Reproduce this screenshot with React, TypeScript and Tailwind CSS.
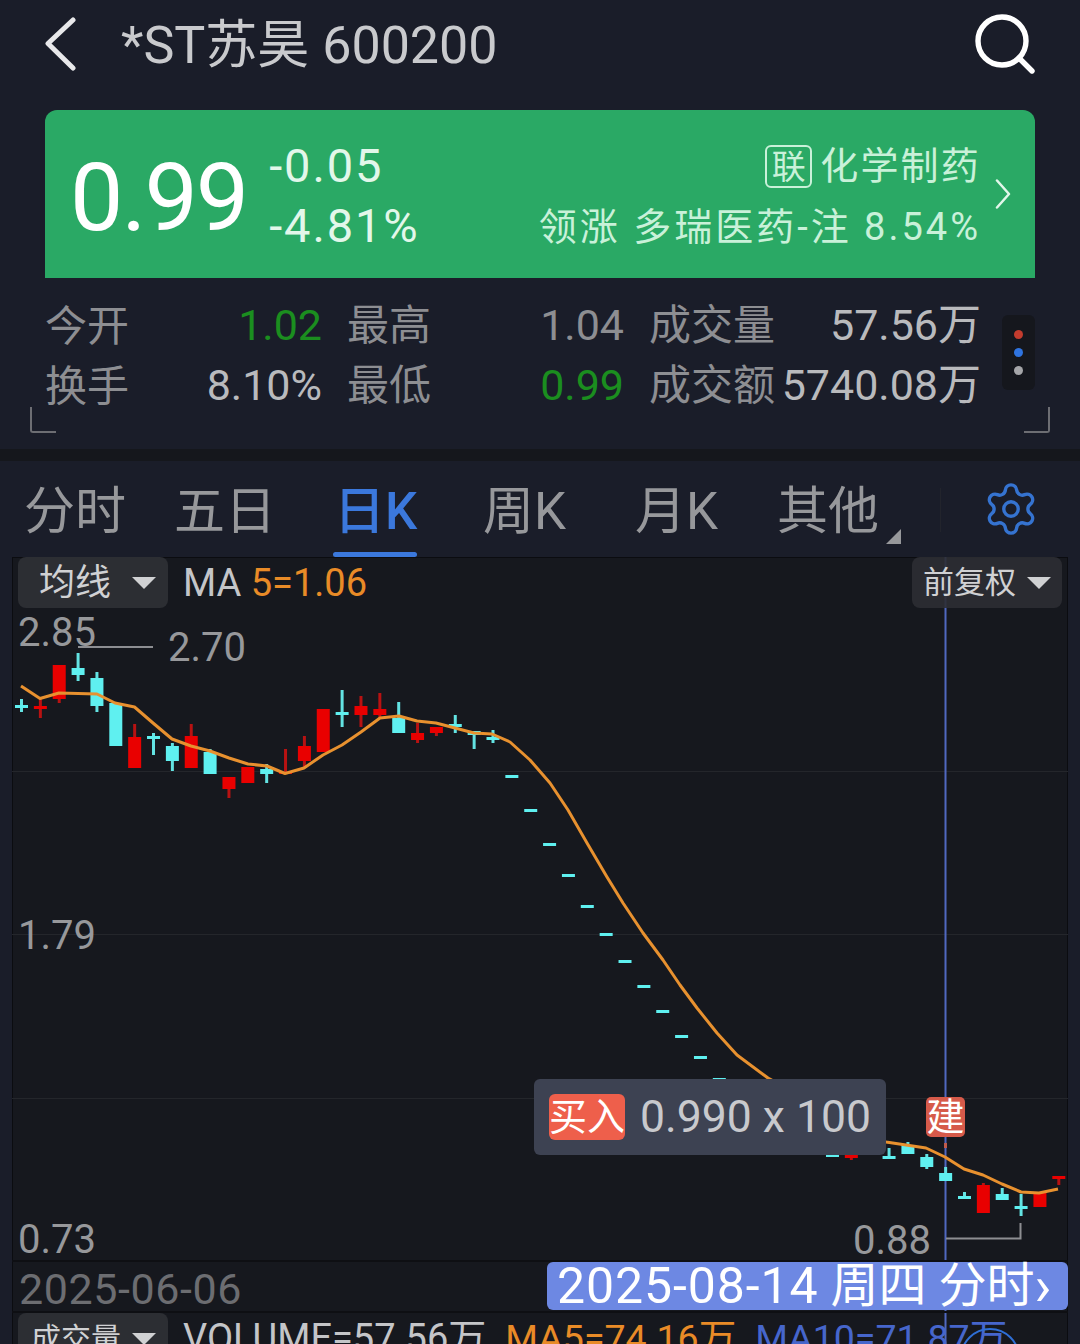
import { Search, Settings } from 'lucide-react';

const FONT = "font-['Roboto','Noto_Sans_CJK_SC',sans-serif]";

// 行情数据: [x位置序号, 涨跌, 上影, 实体上, 实体下, 下影]
type Candle = [number, 'r' | 'c', number, number, number, number];

const candles: Candle[] = [
  [0, 'c', 699, 705, 708, 712],
  [1, 'r', 698, 706, 709, 718],
  [2, 'r', 665, 665, 699, 703],
  [3, 'c', 653, 668, 675, 681],
  [4, 'c', 672, 678, 706, 712],
  [5, 'c', 703, 703, 746, 746],
  [6, 'r', 724, 737, 768, 768],
  [7, 'c', 733, 736, 739, 755],
  [8, 'c', 743, 746, 761, 771],
  [9, 'r', 724, 736, 768, 768],
  [10, 'c', 749, 752, 774, 774],
  [11, 'r', 777, 777, 789, 798],
  [12, 'r', 767, 767, 783, 783],
  [13, 'c', 764, 769, 774, 783],
  [14, 'r', 749, 772, 773, 773],
  [15, 'r', 736, 746, 761, 767],
  [16, 'r', 709, 709, 752, 752],
  [17, 'c', 690, 712, 715, 727],
  [18, 'r', 696, 706, 715, 727],
  [19, 'r', 693, 709, 715, 718],
  [20, 'c', 702, 718, 733, 733],
  [21, 'r', 723, 733, 740, 743],
  [22, 'r', 727, 727, 733, 736],
  [23, 'c', 715, 724, 727, 733],
  [24, 'c', 731, 731, 735, 749],
  [25, 'c', 730, 737, 740, 743],
  [26, 'c', 775, 775, 778, 778],
  [27, 'c', 809, 809, 812, 812],
  [28, 'c', 843, 843, 846, 846],
  [29, 'c', 874, 874, 877, 877],
  [30, 'c', 905, 905, 908, 908],
  [31, 'c', 933, 933, 936, 936],
  [32, 'c', 960, 960, 963, 963],
  [33, 'c', 985, 985, 988, 988],
  [34, 'c', 1010, 1010, 1013, 1013],
  [35, 'c', 1035, 1035, 1038, 1038],
  [36, 'c', 1056, 1056, 1059, 1059],
  [37, 'c', 1078, 1078, 1081, 1081],
  [43, 'c', 1155, 1155, 1157, 1157],
  [44, 'r', 1155, 1155, 1158, 1160],
  [46, 'c', 1148, 1156, 1159, 1159],
  [47, 'c', 1142, 1145, 1154, 1154],
  [48, 'c', 1154, 1157, 1167, 1169],
  [49, 'c', 1167, 1173, 1181, 1181],
  [50, 'c', 1192, 1196, 1199, 1199],
  [51, 'r', 1183, 1185, 1213, 1213],
  [52, 'c', 1188, 1194, 1200, 1200],
  [53, 'c', 1194, 1206, 1209, 1216],
  [54, 'r', 1193, 1193, 1207, 1207],
  [55, 'r', 1176, 1176, 1179, 1185],
];

const maLine =
  '21,686 40,698.5 59,693 78,693.5 97,694 115,703 134.5,707 153,723 172,739 191,746 210,751 229,758 248,764 267,766 285,773.5 304,768 323,755 342,745 361,732 380,718 399,716 417,721 436,723 455,728 474,733 492,734 510,742 530,760 550,783 568,810 587,843 607,877 623,903 643,933 663,960 680,985 697,1008 717,1033 737,1055 768,1078 886,1142 926,1148 945,1157 964,1169 983,1175 1002,1184 1021,1192 1039,1193 1058,1189';

function KChart() {
  return (
    <svg className="absolute left-0 top-0" width="1080" height="787" viewBox="0 557 1080 787">
      {[771, 934, 1098].map((y) => (
        <line key={y} x1="12" x2="1068" y1={y + 0.5} y2={y + 0.5} stroke="#24262b" strokeWidth="1" />
      ))}
      <line x1="945.5" x2="945.5" y1="557" y2="1344" stroke="#5068c0" strokeWidth="2" />
      {candles.map(([i, kind, hi, top, bottom, lo]) => {
        const x = 21.5 + i * 18.86;
        const color = kind === 'r' ? '#e90000' : '#5ff0f0';
        const wick = kind === 'r' ? '#b81212' : '#63e3e3';
        return (
          <g key={i}>
            <line x1={x} x2={x} y1={hi} y2={lo} stroke={wick} strokeWidth="3" />
            <rect x={x - 6.5} y={top} width="13" height={Math.max(bottom - top, 2)} fill={color} />
          </g>
        );
      })}
      <polyline points={maLine} fill="none" stroke="#e8912f" strokeWidth="3" strokeLinejoin="round" />
      {/* 最高/最低 标注线 */}
      <line x1="78" x2="153" y1="647" y2="647" stroke="#8d8e92" strokeWidth="2" />
      <path d="M946 1238.5H1020.5V1223" fill="none" stroke="#8d8e92" strokeWidth="2" />
      <rect x="944" y="1143" width="3" height="5" fill="#c05a4c" />
    </svg>
  );
}

export default function App() {
  return (
    <div className={`${FONT} w-[1080px] h-[1344px] overflow-hidden bg-[#1a1d29] flex flex-col whitespace-nowrap`}>
      {/* 顶部标题 */}
      <div className="h-[110px] shrink-0 flex items-start pl-[44px] pr-[39px] pt-[8px]">
        <svg width="34" height="56" viewBox="0 0 34 56" className="mt-[9px]" fill="none" stroke="#e8e8ea" strokeWidth="5" strokeLinecap="round" strokeLinejoin="round">
          <polyline points="29,3 4,26.5 29,51" />
        </svg>
        <span className="ml-[43px] text-[52px] leading-[76px] text-[#c9cacd]">*ST苏昊 600200</span>
        <Search size={72} strokeWidth={1.8} className="ml-auto text-white" />
      </div>

      {/* 价格卡片 */}
      <div className="mx-[45px] h-[168px] shrink-0 bg-[#2aa965] rounded-t-[12px] flex items-center pl-[25px] pr-[24px]">
        <span className="text-[95px] leading-none text-white mt-[6px] tracking-[-2px]">0.99</span>
        <div className="ml-[22px] flex flex-col text-[47px] tracking-[1.9px] leading-[60px] text-[#e2f7ea] mt-[4px]">
          <span>-0.05</span>
          <span>-4.81%</span>
        </div>
        <div className="ml-auto flex flex-col items-end text-[38px] leading-[61px] text-[#c9f1d9] mt-[6px]">
          <div className="flex items-center">
            <span className="w-[47px] h-[43px] border-2 border-[#c9f1d9] rounded-[6px] flex items-center justify-center text-[34px] leading-none mr-[8px]">联</span>
            <span className="tracking-[2.2px]">化学制药</span>
          </div>
          <span className="tracking-[3px]">领涨 多瑞医药-注 8.54%</span>
        </div>
        <svg width="16" height="30" viewBox="0 0 16 30" className="ml-[14px]" fill="none" stroke="#e2f7ea" strokeWidth="2.5" strokeLinecap="round" strokeLinejoin="round">
          <polyline points="2,1.5 14,15 2,28.5" />
        </svg>
      </div>

      {/* 统计数据 */}
      <div className="relative h-[171px] shrink-0 pt-[17px] pl-[45px] text-[42px] leading-[60px] text-[#8d8e92]">
        <div className="flex h-[60px]">
          <span className="w-[82px] mt-[2px]">今开</span>
          <span className="w-[195px] text-right text-[43px] text-[#1b8e1f]">1.02</span>
          <span className="ml-[25px] w-[82px] mt-[1px]">最高</span>
          <span className="w-[195px] text-right text-[43px]">1.04</span>
          <span className="ml-[25px] w-[126px] mt-[1px]">成交量</span>
          <span className="w-[206px] text-right text-[43px] text-[#b9babd]">57.56万</span>
        </div>
        <div className="flex h-[60px]">
          <span className="w-[82px] mt-[2px]">换手</span>
          <span className="w-[195px] text-right text-[43px] text-[#b9babd]">8.10%</span>
          <span className="ml-[25px] w-[82px] mt-[1px]">最低</span>
          <span className="w-[195px] text-right text-[43px] text-[#1b8e1f]">0.99</span>
          <span className="ml-[25px] w-[126px] mt-[1px]">成交额</span>
          <span className="w-[206px] text-right text-[43px] text-[#b9babd]">5740.08万</span>
        </div>
        <div className="absolute left-[1002px] top-[37px] w-[33px] h-[75px] rounded-[6px] bg-[#15171d] flex flex-col items-center justify-center gap-[9px]">
          <span className="w-[9px] h-[9px] rounded-full bg-[#c33c2e]" />
          <span className="w-[9px] h-[9px] rounded-full bg-[#2f74e0]" />
          <span className="w-[9px] h-[9px] rounded-full bg-[#a5a6a9]" />
        </div>
        <div className="absolute left-[30px] top-[129px] w-[26px] h-[26px] border-l-2 border-b-2 border-[#6d6e73] rounded-bl-[3px]" />
        <div className="absolute left-[1024px] top-[129px] w-[26px] h-[26px] border-r-2 border-b-2 border-[#6d6e73] rounded-br-[3px]" />
      </div>

      <div className="h-[12px] shrink-0 bg-[#15171c]" />

      {/* 周期切换 */}
      <div className="relative h-[96px] shrink-0 text-[51px] leading-none text-[#97989b]">
        <span className="absolute left-[24px] top-[25px]">分时</span>
        <span className="absolute left-[174px] top-[25px]">五日</span>
        <span className="absolute left-[334px] top-[25px] font-medium text-[#3b78dc]">日K</span>
        <div className="absolute left-[333px] top-[91px] w-[84px] h-[5px] rounded-full bg-[#3b78dc]" />
        <span className="absolute left-[483px] top-[25px]">周K</span>
        <span className="absolute left-[635px] top-[25px]">月K</span>
        <span className="absolute left-[777px] top-[25px]">其他</span>
        <div className="absolute left-[886px] top-[68px] w-0 h-0 border-l-[15px] border-l-transparent border-b-[15px] border-b-[#97989b]" />
        <div className="absolute left-[940px] top-[27px] w-px h-[44px] bg-[#22242c]" />
        <Settings size={58} strokeWidth={1.4} className="absolute left-[982px] top-[19px] text-[#3573d0]" />
      </div>

      {/* K线图 */}
      <div className="relative flex-1 bg-[#1a1d29]">
        <div className="absolute left-[12px] top-0 w-[1056px] h-full bg-[#16181e] border-x border-t border-[#0b0c10]" />
        <KChart />

        <div className="absolute left-[18px] top-0 w-[150px] h-[51px] rounded-[8px] bg-[#2c2e33] flex items-center pl-[21px] text-[36px] leading-none text-[#d0d1d3]">
          均线
          <span className="ml-[21px] w-0 h-0 border-x-[12px] border-x-transparent border-t-[12px] border-t-[#d0d1d3]" />
        </div>
        <div className="absolute left-[183px] top-[3px] text-[38px] leading-[46px] text-[#c4c5c8]">
          MA <span className="text-[#e98b27]">5=1.06</span>
        </div>
        <div className="absolute left-[912px] top-0 w-[150px] h-[51px] rounded-[8px] bg-[#2c2e33]/90 flex items-center pl-[11px] text-[31px] leading-none text-[#d0d1d3]">
          前复权
          <span className="ml-[11px] w-0 h-0 border-x-[12px] border-x-transparent border-t-[12px] border-t-[#d0d1d3]" />
        </div>

        <span className="absolute left-[18px] top-[51px] text-[40px] leading-[50px] text-[#97989b]">2.85</span>
        <span className="absolute left-[168px] top-[66px] text-[40px] leading-[50px] text-[#97989b]">2.70</span>
        <span className="absolute left-[18px] top-[354px] text-[40px] leading-[50px] text-[#97989b]">1.79</span>
        <span className="absolute left-[18px] top-[658px] text-[40px] leading-[50px] text-[#97989b]">0.73</span>
        <span className="absolute left-[853px] top-[659px] text-[40px] leading-[50px] text-[#97989b]">0.88</span>

        {/* 买入浮层 */}
        <div className="absolute left-[534px] top-[522px] w-[352px] h-[76px] rounded-[6px] bg-[#3d4252] flex items-center pl-[15px]">
          <span className="w-[76px] h-[46px] rounded-[6px] bg-[#ee5f4b] text-[38px] leading-[46px] text-white text-center">买入</span>
          <span className="ml-[15px] text-[44.5px] leading-none text-[#c8c9cd]">0.990 x 100</span>
        </div>
        <span className="absolute left-[926px] top-[540px] w-[39px] h-[40px] rounded-[5px] bg-[#d65a4a] text-[38px] leading-[40px] text-white text-center">建</span>

        {/* 日期栏 */}
        <div className="absolute left-[12px] top-[703px] w-[1056px] h-[53px] border-y-2 border-[#0e0f13]" />
        <span className="absolute left-[19px] top-[707px] text-[43px] tracking-[0.6px] leading-[50px] text-[#6c6d71]">2025-06-06</span>
        <div className="absolute left-[547px] top-[705px] w-[521px] h-[48px] rounded-[6px] bg-[#6d88e3] flex items-center pl-[10px] text-[48px] leading-[48px] text-white">
          <span className="text-[50px] tracking-[0.9px]">2025-08-14</span>
          <span className="ml-[12px]">周四</span>
          <span className="ml-[12px]">分时</span>
          <span className="text-[56px]">›</span>
        </div>

        {/* 成交量 */}
        <div className="absolute left-[18px] top-[756px] w-[150px] h-[51px] rounded-[8px] bg-[#2c2e33] flex items-center pl-[13px] text-[30px] leading-none text-[#d0d1d3]">
          成交量
          <span className="ml-[11px] w-0 h-0 border-x-[12px] border-x-transparent border-t-[12px] border-t-[#d0d1d3]" />
        </div>
        <div className="absolute left-[183px] top-[758px] text-[38px] leading-[46px] text-[#c4c5c8]">
          VOLUME=57.56万
          <span className="ml-[19px] text-[37.5px] text-[#e98b27]">MA5=74.16万</span>
          <span className="ml-[19px] text-[37.5px] text-[#4666cc]">MA10=71.87万</span>
        </div>
        <div className="absolute left-[960px] top-[771px] w-[60px] h-[60px] rounded-full border-2 border-[#2f6fd6]" />
      </div>
    </div>
  );
}
